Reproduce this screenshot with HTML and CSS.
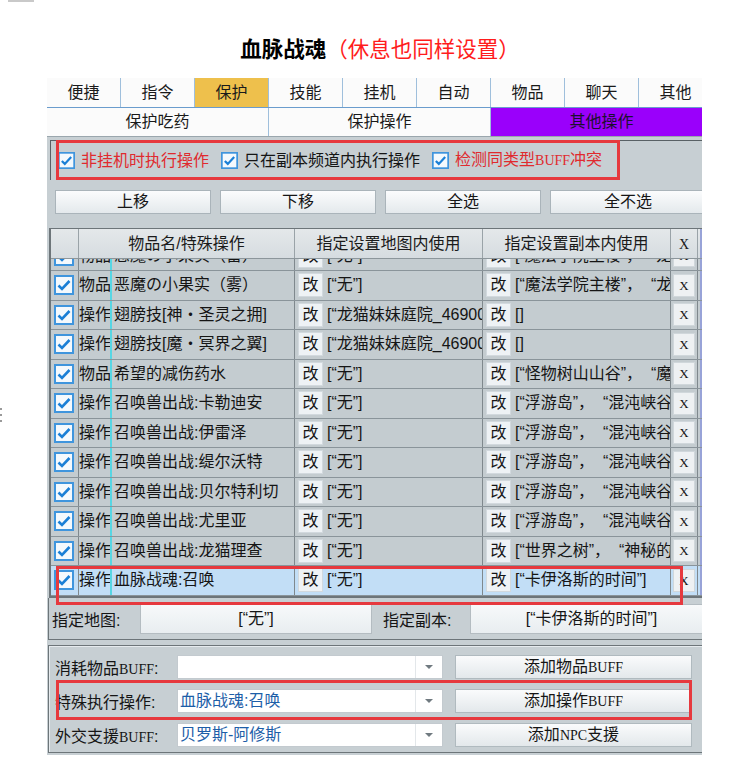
FILE: index.html
```html
<!DOCTYPE html>
<html lang="zh-CN">
<head>
<meta charset="utf-8">
<title>血脉战魂</title>
<link rel="stylesheet" href="styles.css">
</head>
<body>
<div class="mark"></div>
<div class="dots"><i></i><i></i><i></i></div>
<h1 class="title"><span class="t-black">血脉战魂</span><span class="t-red">（休息也同样设置）</span></h1>
<div class="win">
  <div class="panel">
    <div class="tabs">
      <div class="tab">便捷</div>
      <div class="tab">指令</div>
      <div class="tab tab-active">保护</div>
      <div class="tab">技能</div>
      <div class="tab">挂机</div>
      <div class="tab">自动</div>
      <div class="tab">物品</div>
      <div class="tab">聊天</div>
      <div class="tab">其他</div>
    </div>
    <div class="subtabs">
      <div class="subtab">保护吃药</div>
      <div class="subtab">保护操作</div>
      <div class="subtab sub-active">其他操作</div>
    </div>
    <div class="body">
      <div class="chkgroup">
        <label class="chk red"><svg class="cb cb-sm" viewBox="0 0 20 20"><rect x="1" y="1" width="18" height="18" fill="#f4f9fd" stroke="#3f95dd" stroke-width="2"/><path d="M4.5 10.5l3.5 3.5 7.5-8" fill="none" stroke="#1a7fd6" stroke-width="2.6"/></svg><span>非挂机时执行操作</span></label>
        <label class="chk"><svg class="cb cb-sm" viewBox="0 0 20 20"><rect x="1" y="1" width="18" height="18" fill="#f4f9fd" stroke="#3f95dd" stroke-width="2"/><path d="M4.5 10.5l3.5 3.5 7.5-8" fill="none" stroke="#1a7fd6" stroke-width="2.6"/></svg><span>只在副本频道内执行操作</span></label>
        <label class="chk red"><svg class="cb cb-sm" viewBox="0 0 20 20"><rect x="1" y="1" width="18" height="18" fill="#f4f9fd" stroke="#3f95dd" stroke-width="2"/><path d="M4.5 10.5l3.5 3.5 7.5-8" fill="none" stroke="#1a7fd6" stroke-width="2.6"/></svg><span>检测同类型<span class="lat">BUFF</span>冲突</span></label>
      </div>
      <div class="btnrow">
        <div class="btn">上移</div>
        <div class="btn">下移</div>
        <div class="btn">全选</div>
        <div class="btn">全不选</div>
      </div>
      <div class="table">
        <div class="thead">
          <div class="h c-chk"></div>
          <div class="h c-name">物品名/特殊操作</div>
          <div class="h c-map">指定设置地图内使用</div>
          <div class="h c-fb">指定设置副本内使用</div>
          <div class="h c-x"><span class="lat">X</span></div>
          <div class="h c-tail"></div>
        </div>
        <div class="tbody">
          <div class="rows">
            <div class="row">
              <div class="c c-chk"><svg class="cb" viewBox="0 0 20 20"><rect x="1" y="1" width="18" height="18" fill="#f4f9fd" stroke="#3f95dd" stroke-width="2"/><path d="M4.5 10.5l3.5 3.5 7.5-8" fill="none" stroke="#1a7fd6" stroke-width="2.6"/></svg></div>
              <div class="c c-name"><span class="type">物品</span><span class="sep"></span><span class="nm">恶魔の小果实（雷）</span></div>
              <div class="c c-map"><span class="gai">改</span><span class="val">[“无”]</span></div>
              <div class="c c-fb"><span class="gai">改</span><span class="val">[“魔法学院主楼”，&nbsp;&nbsp;“龙猫妹妹庭院”]</span></div>
              <div class="c c-x"><span class="xbtn">X</span></div>
              <div class="c c-tail"></div>
            </div>
            <div class="row">
              <div class="c c-chk"><svg class="cb" viewBox="0 0 20 20"><rect x="1" y="1" width="18" height="18" fill="#f4f9fd" stroke="#3f95dd" stroke-width="2"/><path d="M4.5 10.5l3.5 3.5 7.5-8" fill="none" stroke="#1a7fd6" stroke-width="2.6"/></svg></div>
              <div class="c c-name"><span class="type">物品</span><span class="sep"></span><span class="nm">恶魔の小果实（雾）</span></div>
              <div class="c c-map"><span class="gai">改</span><span class="val">[“无”]</span></div>
              <div class="c c-fb"><span class="gai">改</span><span class="val">[“魔法学院主楼”，&nbsp;&nbsp;“龙猫妹妹庭院”]</span></div>
              <div class="c c-x"><span class="xbtn">X</span></div>
              <div class="c c-tail"></div>
            </div>
            <div class="row">
              <div class="c c-chk"><svg class="cb" viewBox="0 0 20 20"><rect x="1" y="1" width="18" height="18" fill="#f4f9fd" stroke="#3f95dd" stroke-width="2"/><path d="M4.5 10.5l3.5 3.5 7.5-8" fill="none" stroke="#1a7fd6" stroke-width="2.6"/></svg></div>
              <div class="c c-name"><span class="type">操作</span><span class="sep"></span><span class="nm">翅膀技[神・圣灵之拥]</span></div>
              <div class="c c-map"><span class="gai">改</span><span class="val">[“龙猫妹妹庭院_469001”]</span></div>
              <div class="c c-fb"><span class="gai">改</span><span class="val">[]</span></div>
              <div class="c c-x"><span class="xbtn">X</span></div>
              <div class="c c-tail"></div>
            </div>
            <div class="row">
              <div class="c c-chk"><svg class="cb" viewBox="0 0 20 20"><rect x="1" y="1" width="18" height="18" fill="#f4f9fd" stroke="#3f95dd" stroke-width="2"/><path d="M4.5 10.5l3.5 3.5 7.5-8" fill="none" stroke="#1a7fd6" stroke-width="2.6"/></svg></div>
              <div class="c c-name"><span class="type">操作</span><span class="sep"></span><span class="nm">翅膀技[魔・冥界之翼]</span></div>
              <div class="c c-map"><span class="gai">改</span><span class="val">[“龙猫妹妹庭院_469001”]</span></div>
              <div class="c c-fb"><span class="gai">改</span><span class="val">[]</span></div>
              <div class="c c-x"><span class="xbtn">X</span></div>
              <div class="c c-tail"></div>
            </div>
            <div class="row">
              <div class="c c-chk"><svg class="cb" viewBox="0 0 20 20"><rect x="1" y="1" width="18" height="18" fill="#f4f9fd" stroke="#3f95dd" stroke-width="2"/><path d="M4.5 10.5l3.5 3.5 7.5-8" fill="none" stroke="#1a7fd6" stroke-width="2.6"/></svg></div>
              <div class="c c-name"><span class="type">物品</span><span class="sep"></span><span class="nm">希望的减伤药水</span></div>
              <div class="c c-map"><span class="gai">改</span><span class="val">[“无”]</span></div>
              <div class="c c-fb"><span class="gai">改</span><span class="val">[“怪物树山山谷”，&nbsp;&nbsp;“魔法学院”]</span></div>
              <div class="c c-x"><span class="xbtn">X</span></div>
              <div class="c c-tail"></div>
            </div>
            <div class="row">
              <div class="c c-chk"><svg class="cb" viewBox="0 0 20 20"><rect x="1" y="1" width="18" height="18" fill="#f4f9fd" stroke="#3f95dd" stroke-width="2"/><path d="M4.5 10.5l3.5 3.5 7.5-8" fill="none" stroke="#1a7fd6" stroke-width="2.6"/></svg></div>
              <div class="c c-name"><span class="type">操作</span><span class="sep"></span><span class="nm">召唤兽出战:卡勒迪安</span></div>
              <div class="c c-map"><span class="gai">改</span><span class="val">[“无”]</span></div>
              <div class="c c-fb"><span class="gai">改</span><span class="val">[“浮游岛”，&nbsp;&nbsp;“混沌峡谷”]</span></div>
              <div class="c c-x"><span class="xbtn">X</span></div>
              <div class="c c-tail"></div>
            </div>
            <div class="row">
              <div class="c c-chk"><svg class="cb" viewBox="0 0 20 20"><rect x="1" y="1" width="18" height="18" fill="#f4f9fd" stroke="#3f95dd" stroke-width="2"/><path d="M4.5 10.5l3.5 3.5 7.5-8" fill="none" stroke="#1a7fd6" stroke-width="2.6"/></svg></div>
              <div class="c c-name"><span class="type">操作</span><span class="sep"></span><span class="nm">召唤兽出战:伊雷泽</span></div>
              <div class="c c-map"><span class="gai">改</span><span class="val">[“无”]</span></div>
              <div class="c c-fb"><span class="gai">改</span><span class="val">[“浮游岛”，&nbsp;&nbsp;“混沌峡谷”]</span></div>
              <div class="c c-x"><span class="xbtn">X</span></div>
              <div class="c c-tail"></div>
            </div>
            <div class="row">
              <div class="c c-chk"><svg class="cb" viewBox="0 0 20 20"><rect x="1" y="1" width="18" height="18" fill="#f4f9fd" stroke="#3f95dd" stroke-width="2"/><path d="M4.5 10.5l3.5 3.5 7.5-8" fill="none" stroke="#1a7fd6" stroke-width="2.6"/></svg></div>
              <div class="c c-name"><span class="type">操作</span><span class="sep"></span><span class="nm">召唤兽出战:缇尔沃特</span></div>
              <div class="c c-map"><span class="gai">改</span><span class="val">[“无”]</span></div>
              <div class="c c-fb"><span class="gai">改</span><span class="val">[“浮游岛”，&nbsp;&nbsp;“混沌峡谷”]</span></div>
              <div class="c c-x"><span class="xbtn">X</span></div>
              <div class="c c-tail"></div>
            </div>
            <div class="row">
              <div class="c c-chk"><svg class="cb" viewBox="0 0 20 20"><rect x="1" y="1" width="18" height="18" fill="#f4f9fd" stroke="#3f95dd" stroke-width="2"/><path d="M4.5 10.5l3.5 3.5 7.5-8" fill="none" stroke="#1a7fd6" stroke-width="2.6"/></svg></div>
              <div class="c c-name"><span class="type">操作</span><span class="sep"></span><span class="nm">召唤兽出战:贝尔特利切</span></div>
              <div class="c c-map"><span class="gai">改</span><span class="val">[“无”]</span></div>
              <div class="c c-fb"><span class="gai">改</span><span class="val">[“浮游岛”，&nbsp;&nbsp;“混沌峡谷”]</span></div>
              <div class="c c-x"><span class="xbtn">X</span></div>
              <div class="c c-tail"></div>
            </div>
            <div class="row">
              <div class="c c-chk"><svg class="cb" viewBox="0 0 20 20"><rect x="1" y="1" width="18" height="18" fill="#f4f9fd" stroke="#3f95dd" stroke-width="2"/><path d="M4.5 10.5l3.5 3.5 7.5-8" fill="none" stroke="#1a7fd6" stroke-width="2.6"/></svg></div>
              <div class="c c-name"><span class="type">操作</span><span class="sep"></span><span class="nm">召唤兽出战:尤里亚</span></div>
              <div class="c c-map"><span class="gai">改</span><span class="val">[“无”]</span></div>
              <div class="c c-fb"><span class="gai">改</span><span class="val">[“浮游岛”，&nbsp;&nbsp;“混沌峡谷”]</span></div>
              <div class="c c-x"><span class="xbtn">X</span></div>
              <div class="c c-tail"></div>
            </div>
            <div class="row">
              <div class="c c-chk"><svg class="cb" viewBox="0 0 20 20"><rect x="1" y="1" width="18" height="18" fill="#f4f9fd" stroke="#3f95dd" stroke-width="2"/><path d="M4.5 10.5l3.5 3.5 7.5-8" fill="none" stroke="#1a7fd6" stroke-width="2.6"/></svg></div>
              <div class="c c-name"><span class="type">操作</span><span class="sep"></span><span class="nm">召唤兽出战:龙猫理查</span></div>
              <div class="c c-map"><span class="gai">改</span><span class="val">[“无”]</span></div>
              <div class="c c-fb"><span class="gai">改</span><span class="val">[“世界之树”，&nbsp;&nbsp;“神秘的森林”]</span></div>
              <div class="c c-x"><span class="xbtn">X</span></div>
              <div class="c c-tail"></div>
            </div>
            <div class="row row-sel">
              <div class="c c-chk"><svg class="cb" viewBox="0 0 20 20"><rect x="1" y="1" width="18" height="18" fill="#f4f9fd" stroke="#3f95dd" stroke-width="2"/><path d="M4.5 10.5l3.5 3.5 7.5-8" fill="none" stroke="#1a7fd6" stroke-width="2.6"/></svg></div>
              <div class="c c-name"><span class="type">操作</span><span class="sep"></span><span class="nm">血脉战魂:召唤</span></div>
              <div class="c c-map"><span class="gai">改</span><span class="val">[“无”]</span></div>
              <div class="c c-fb"><span class="gai">改</span><span class="val">[“卡伊洛斯的时间”]</span></div>
              <div class="c c-x"><span class="xbtn">X</span></div>
              <div class="c c-tail"></div>
            </div>
          </div>
        </div>
      </div>
      <div class="mapframe">
        <span class="mlabel">指定地图:</span>
        <span class="mbox mbox1">[“无”]</span>
        <span class="mlabel mlabel2">指定副本:</span>
        <span class="mbox mbox2">[“卡伊洛斯的时间”]</span>
      </div>
      <div class="groupbox">
        <div class="grow">
          <span class="glabel">消耗物品<span class="lat">BUFF</span>:</span>
          <span class="combo"><span class="ctext"></span><span class="drop"><i></i></span></span>
          <span class="gbtn">添加物品<span class="lat">BUFF</span></span>
        </div>
        <div class="grow">
          <span class="glabel">特殊执行操作:</span>
          <span class="combo"><span class="ctext">血脉战魂:召唤</span><span class="drop"><i></i></span></span>
          <span class="gbtn">添加操作<span class="lat">BUFF</span></span>
        </div>
        <div class="grow">
          <span class="glabel">外交支援<span class="lat">BUFF</span>:</span>
          <span class="combo"><span class="ctext">贝罗斯-阿修斯</span><span class="drop"><i></i></span></span>
          <span class="gbtn">添加<span class="lat">NPC</span>支援</span>
        </div>
      </div>
      <div class="anno anno-chk"></div>
      <div class="anno anno-row"></div>
      <div class="anno anno-grp"></div>
    </div>
  </div>
</div>
</body>
</html>
```

FILE: styles.css
```css
html, body {
  margin: 0;
  padding: 0;
  background: #ffffff;
}

body {
  position: relative;
  font-family: "Liberation Sans", "Noto Sans CJK SC", sans-serif;
  font-size: 16px;
  color: #151515;
  text-autospace: no-autospace;
}

.mark {
  width: 26px;
  height: 2px;
  margin-left: 8px;
  background: #c9c9c9;
}

.dots {
  position: absolute;
  left: 0;
  top: 408px;
  display: flex;
  flex-direction: column;
  gap: 4px;
}

.dots i {
  display: block;
  width: 2px;
  height: 2px;
  background: #9a9a9a;
}

.title {
  margin: 0 0 0 47px;
  width: 666px;
  height: 76px;
  box-sizing: border-box;
  padding-top: 32px;
  line-height: 28px;
  font-size: 21.5px;
  text-align: center;
  font-family: "Noto Sans CJK SC", sans-serif;
  font-weight: 400;
}

.t-black {
  color: #000;
  font-weight: 700;
}

.t-red {
  color: #ff1c1c;
}

.win {
  margin-left: 47px;
  width: 655px;
  overflow: hidden;
}

.panel {
  width: 666px;
}

/* top tabs */
.tabs {
  display: flex;
  height: 30px;
  box-sizing: border-box;
  border-bottom: 1px solid #6a9ccd;
  background: #fbfbfb;
}

.tab {
  flex: none;
  width: 74px;
  box-sizing: border-box;
  border-right: 1px solid #9fbfdc;
  text-align: center;
  line-height: 29px;
  font-size: 16px;
  color: #1a1a1a;
}

.tab-active {
  background: #eec04c;
}

.subtabs {
  display: flex;
  height: 29px;
  box-sizing: border-box;
  border-bottom: 1px solid #9aa6ad;
  background: #fbfbfb;
}

.subtab {
  flex: none;
  width: 222px;
  box-sizing: border-box;
  border-right: 1px solid #9fbfdc;
  text-align: center;
  line-height: 28px;
  font-size: 16px;
  color: #1a1a1a;
}

.sub-active {
  background: #9a00fb;
  color: #1c1030;
}

/* main gray body */
.body {
  position: relative;
  height: 618px;
  box-sizing: border-box;
  padding-top: 3px;
  background: #c7cfd3;
}

.lat {
  font-family: "Liberation Serif", serif;
  font-size: 14px;
}

.chkgroup {
  margin-left: 3px;
  height: 40px;
  box-sizing: border-box;
  border-left: 1px solid #596165;
  border-top: 1px solid #596165;
  display: flex;
  align-items: center;
  padding-left: 7px;
}

.chk {
  display: inline-flex;
  align-items: center;
  gap: 6px;
  margin-right: 12px;
  line-height: 22px;
  font-size: 16px;
  color: #151515;
  white-space: nowrap;
}

.chk.red {
  color: #e02a2e;
}

.cb {
  flex: none;
  width: 20px;
  height: 20px;
  display: block;
}

.cb-sm {
  width: 17px;
  height: 17px;
}

/* buttons */
.btnrow {
  margin-top: 10px;
  padding-left: 8px;
  display: flex;
  gap: 9px;
  height: 24px;
}

.btn {
  flex: none;
  width: 156px;
  height: 24px;
  box-sizing: border-box;
  border: 1px solid #aab4ba;
  background: linear-gradient(#fbfcfd, #e4e9ec);
  text-align: center;
  line-height: 22px;
  font-size: 16px;
}

/* table */
.table {
  margin-top: 14px;
  margin-left: 2px;
  width: 664px;
  border-left: 2px solid #6d7579;
  border-top: 1px solid #6d7579;
  border-bottom: 2px solid #6d7579;
}

.thead {
  display: flex;
  height: 30px;
  box-sizing: border-box;
  border-bottom: 1px solid #8c969b;
  background: linear-gradient(#e4e8ea, #d6dce0);
}

.h {
  flex: none;
  box-sizing: border-box;
  border-right: 1px solid #9aa3a8;
  text-align: center;
  line-height: 29px;
  font-size: 16px;
  color: #1a1a1a;
}

.c-chk { width: 28px; }
.c-name { width: 216px; }
.c-map { width: 188px; }
.c-fb { width: 188px; }
.c-x { width: 27px; }
.c-tail {
  flex: 1;
  border-right: none;
  margin-left: 2px;
  border-left: 2px solid #98a3d8;
}

.tbody {
  height: 337px;
  overflow: hidden;
}

.rows {
  margin-top: -17.5px;
}

.row {
  display: flex;
  height: 29.5px;
  box-sizing: border-box;
  border-bottom: 1px solid #8a949a;
  background: #c4ccd0;
}

.row-sel {
  background: #c2def6;
}

.c {
  flex: none;
  box-sizing: border-box;
  border-right: 1px solid #7f888d;
  display: flex;
  align-items: center;
  overflow: hidden;
  white-space: nowrap;
  font-size: 16px;
  line-height: 22px;
}

.c.c-tail {
  flex: 1;
  border-right: none;
}

.c-chk .cb {
  margin-left: 3px;
}

.type {
  flex: none;
  width: 31px;
  box-sizing: border-box;
}

.sep {
  flex: none;
  align-self: stretch;
  width: 2px;
  background: #56d6e4;
}

.nm {
  padding-left: 2px;
}

.gai {
  flex: none;
  margin-left: 3px;
  width: 25px;
  height: 24px;
  box-sizing: border-box;
  border: 1px solid #d2d9de;
  background: #eef2f5;
  text-align: center;
  line-height: 22px;
}

.val {
  margin-left: 4px;
}

.xbtn {
  flex: none;
  margin-left: 2px;
  width: 22px;
  height: 23px;
  box-sizing: border-box;
  border: 1px solid #d0d7db;
  background: #eef1f3;
  text-align: center;
  line-height: 21px;
  font-family: "Liberation Serif", serif;
  font-size: 13px;
}

/* map frame */
.mapframe {
  margin-left: 1px;
  height: 42px;
  box-sizing: border-box;
  border-left: 1px solid #6d7579;
  border-bottom: 1px solid #6d7579;
  display: flex;
  align-items: center;
  padding-left: 3px;
  white-space: nowrap;
}

.mlabel {
  flex: none;
  width: 88px;
  font-size: 16px;
}

.mlabel2 {
  margin-left: 11px;
  width: 87px;
}

.mbox {
  flex: none;
  height: 30px;
  box-sizing: border-box;
  border: 1px solid #b4bcc1;
  background: linear-gradient(#f7f9fa, #e8edf0);
  text-align: center;
  line-height: 28px;
  font-size: 16px;
}

.mbox1 { width: 232px; }
.mbox2 { width: 243px; }

/* bottom group */
.groupbox {
  margin-top: 5px;
  margin-left: 1px;
  height: 108px;
  box-sizing: border-box;
  border-top: 1px solid #6d7579;
  border-left: 1px solid #6d7579;
  border-bottom: 1px solid #6d7579;
  box-shadow: inset 1px 1px 0 #e6ebee;
  padding: 9px 0 0 6px;
  display: flex;
  flex-direction: column;
  gap: 10px;
}

.grow {
  display: flex;
  align-items: center;
  height: 24px;
  white-space: nowrap;
}

.glabel {
  flex: none;
  width: 122px;
  font-size: 16px;
}

.combo {
  flex: none;
  width: 266px;
  height: 24px;
  box-sizing: border-box;
  border: 1px solid #c3cacf;
  background: #ffffff;
  display: flex;
}

.ctext {
  flex: 1;
  padding-left: 2px;
  line-height: 22px;
  font-size: 16px;
  color: #1d5ea8;
}

.drop {
  flex: none;
  width: 26px;
  border-left: 1px solid #e3e7ea;
  display: flex;
  align-items: center;
  justify-content: center;
}

.drop i {
  display: block;
  width: 0;
  height: 0;
  border-left: 4px solid transparent;
  border-right: 4px solid transparent;
  border-top: 4px solid #707a80;
}

.gbtn {
  flex: none;
  margin-left: 12px;
  width: 237px;
  height: 24px;
  box-sizing: border-box;
  border: 1px solid #b0babf;
  background: linear-gradient(#fafbfc, #e3e8eb);
  text-align: center;
  line-height: 22px;
  font-size: 16px;
}

/* red annotation boxes */
.anno {
  position: absolute;
  border: 3px solid #e6393e;
  box-sizing: border-box;
  pointer-events: none;
}

.anno-chk {
  left: 9px;
  top: 3px;
  width: 564px;
  height: 40px;
}

.anno-row {
  left: 9px;
  top: 429px;
  width: 627px;
  height: 39px;
}

.anno-grp {
  left: 9px;
  top: 543px;
  width: 636px;
  height: 40px;
}
```
